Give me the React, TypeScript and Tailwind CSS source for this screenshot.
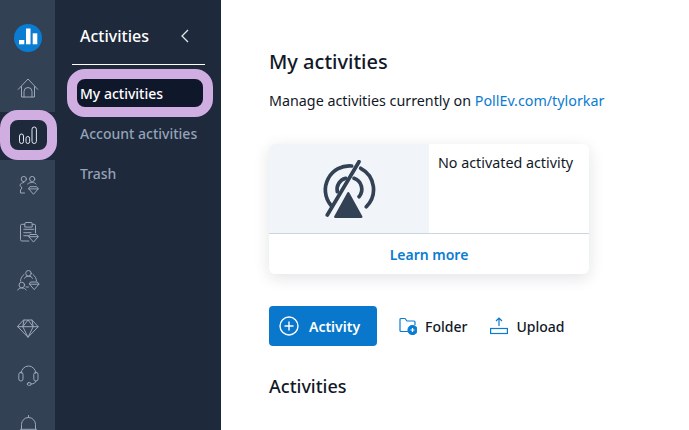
import React from 'react';

const font = { fontFamily: '"Noto Sans", sans-serif' };

const Ic: React.FC<{ children: React.ReactNode }> = ({ children }) => (
  <svg width="24" height="24" viewBox="0 0 24 24" fill="none" stroke="#9ca8b8" strokeWidth="1" strokeLinecap="round" strokeLinejoin="round">
    {children}
  </svg>
);

const Gem: React.FC<{ x: number; y: number }> = ({ x, y }) => (
  <path d={`M${x + 1.5} ${y}h6.400l1.500 2.200-4.700 5.400-4.700-5.400zM${x} ${y + 2.2}h9.400`} />
);

const railIcons: React.ReactNode[] = [
  <Ic key="group">
    <circle cx="7.800" cy="7" r="2.600" />
    <circle cx="16.200" cy="7" r="2.600" />
    <path d="M7.800 10.500c-2 .2-3.800 1.300-3.800 2.800l2 2.700-1.500 2v3h4" />
    <path d="M11.500 12c1.500-1.500 3.500-1.500 5-1.500 1.500 0 2.500.5 3.500 1.500" />
    <Gem x={12.800} y={14.700} />
  </Ic>,
  <Ic key="clip">
    <path d="M8.800 4.300h-3a1.300 1.300 0 0 0-1.300 1.300v14.100a1.300 1.300 0 0 0 1.300 1.300h7" />
    <path d="M16.200 4.300h2a1.300 1.300 0 0 1 1.300 1.300v7.400" />
    <path d="M8.800 6.700v-3a1.200 1.200 0 0 1 1.200-1.200h5a1.200 1.200 0 0 1 1.200 1.200v3z" />
    <path d="M7.800 9.300h10M7.800 12.700h7.200M7.800 15.700h4.700" />
    <Gem x={12.800} y={14.500} />
  </Ic>,
  <Ic key="share">
    <circle cx="12.500" cy="5.300" r="2.800" />
    <path d="M8.500 10.300c.5-1.500 2-2 4-2s3.500.5 4 2" />
    <path d="M4.500 13c0-2.500 1.500-5 3.500-6.500M20.500 13c0-2.500-1.500-5-3.500-6.500" />
    <circle cx="5.800" cy="17" r="2.800" />
    <path d="M1.800 22c.4-1.500 2-2 4-2s3.600.5 4.400 2" />
    <path d="M10 19h2.500" />
    <Gem x={13.500} y={14} />
  </Ic>,
  <Ic key="diamond">
    <path d="M8 4h8l6.200 6.700-10.200 10.600-10.200-10.600z" />
    <path d="M1.800 10.700h20.400M8 4l-1.200 6.700 5.200 10.600 5.200-10.600-1.200-6.700M6.800 10.700l5.200-6.700 5.200 6.700" />
  </Ic>,
  <Ic key="headset">
    <path d="M5.200 9.300a7.300 7.300 0 0 1 14.600 0" />
    <rect x="2.800" y="8.300" width="4.200" height="8.700" rx="2" />
    <rect x="17.800" y="8.300" width="4.200" height="8.700" rx="2" />
    <path d="M19.800 17c0 1.800-1.800 3-4.600 3" />
    <rect x="11.200" y="18.700" width="4" height="2.600" rx="1.300" />
  </Ic>,
  <Ic key="bell">
    <path d="M12.500 3.500v2" />
    <path d="M5.500 17v-4.500a7 7 0 0 1 14 0v4.500" />
    <path d="M4.500 17.300h16" />
  </Ic>,
];

const App: React.FC = () => {
  return (
    <div className="flex h-[430px] w-[689px] overflow-hidden bg-white" style={font}>
      {/* icon rail */}
      <div className="relative z-10 flex h-full w-[55px] shrink-0 flex-col items-stretch bg-[#334155]">
        <div className="flex h-[64px] shrink-0 items-start justify-center pt-[24px]">
          <svg width="28" height="28" viewBox="0 0 28 28">
            <circle cx="14" cy="14" r="14" fill="#0a7cd1" />
            <rect x="5" y="16" width="5.300" height="4.300" fill="#fff" />
            <rect x="12" y="4.500" width="4.500" height="15.800" fill="#fff" />
            <rect x="18.700" y="9.300" width="4.600" height="11" fill="#fff" />
          </svg>
        </div>
        <div className="flex h-[48px] shrink-0 items-center justify-center">
          <Ic>
            <path d="M2.300 13.300l9.700-10.300 9.700 10.300" />
            <path d="M5.500 10.500v10.500h13v-10.500" />
            <path d="M8 21v-5.500a4 4 0 0 1 8 0v5.500" />
          </Ic>
        </div>
        <div className="relative flex h-[48px] shrink-0 items-center justify-center bg-[#1e293b]">
          <svg width="20" height="20" viewBox="0 0 20 20" fill="none" stroke="#e2e8f0" strokeWidth="1">
            <rect x="1.500" y="8" width="4" height="9.500" rx="2" />
            <rect x="8" y="10.500" width="3.600" height="7" rx="1.800" />
            <rect x="14" y="1" width="4.400" height="16.500" rx="2.200" />
          </svg>
          <div className="absolute top-[-2px] left-0 h-[50px] w-[57px] rounded-[18px] border-[10px] border-[#d0aee2]" />
        </div>
        {railIcons.map((icon, i) => (
          <div key={i} className="flex h-[48px] shrink-0 items-center justify-center">
            {icon}
          </div>
        ))}
      </div>

      {/* secondary sidebar */}
      <div className="flex h-full w-[166px] shrink-0 flex-col bg-[#1e293b]">
        <div className="mr-[16px] ml-[17px] flex h-[65px] shrink-0 items-center justify-between border-b border-white pt-[8px] pr-[15px] pl-[8px]">
          <span className="text-base leading-6 font-medium text-white">Activities</span>
          <svg width="10" height="16" viewBox="0 0 10 16" fill="none" stroke="#e2e8f0" strokeWidth="1.300">
            <path d="M8 2l-6 6 6 6" />
          </svg>
        </div>
        <div className="mt-[4px] ml-[12px] flex h-[48px] w-[146px] shrink-0 items-center rounded-[18px] border-[10px] border-[#d0aee2] bg-[#0f172a] pt-[2px] pl-[3px] text-sm font-medium text-white">
          My activities
        </div>
        <div className="-mt-[3px] flex h-[40px] shrink-0 items-center pl-[25px] text-sm font-medium text-[#94a3b8]">Account activities</div>
        <div className="flex h-[40px] shrink-0 items-center pl-[25px] text-sm font-medium text-[#94a3b8]">Trash</div>
      </div>

      {/* main */}
      <div className="flex min-w-0 flex-1 flex-col pt-[48px] pl-[48px]">
        <h1 className="text-xl leading-7 font-medium text-[#111827]">My activities</h1>
        <p className="mt-[15px] text-[14.3px] leading-5 text-[#111827]">
          Manage activities currently on <span className="text-[#0a7cd1]">PollEv.com/tylorkar</span>
        </p>
        <div className="mt-[33px] w-[320px] overflow-hidden rounded-md bg-white shadow-[0_4px_16px_rgba(15,23,42,0.12)]">
          <div className="flex h-[90px] border-b border-[#cbd5e1]">
            <div className="flex w-[160px] items-start justify-center bg-[#f1f5f9] pt-[16px]">
              <svg width="54" height="60" viewBox="0 0 54 60" fill="none" stroke="#334155" strokeWidth="3.700" strokeLinecap="round">
                <path d="M8.700 45a24 24 0 0 1 21-39" />
                <path d="M38.700 8.300a24 24 0 0 1 5.600 38.400" />
                <path d="M15.300 31.700a11.500 11.500 0 0 1 8.400-13.400" />
                <path d="M32 18.300a11.500 11.500 0 0 1 5 18.400" />
                <path d="M37 1.700l-31.700 53.300" />
                <path d="M26.300 33.300l13 23.500h-26z" fill="#334155" strokeWidth="2.400" strokeLinejoin="round" />
              </svg>
            </div>
            <div className="pt-[9px] pl-[9px] text-[14.3px] leading-5 text-[#111827]">No activated activity</div>
          </div>
          <div className="flex h-[40px] items-center justify-center pt-[2px] text-sm font-semibold text-[#0a7cd1]">Learn more</div>
        </div>
        <div className="mt-[32px] flex items-center">
          <button className="flex h-[40px] w-[108px] items-center rounded-sm bg-[#0877cc] pl-[10px] text-sm font-semibold text-white">
            <svg width="20" height="20" viewBox="0 0 20 20" fill="none" stroke="#fff" strokeWidth="1.400" className="mr-[10px]">
              <circle cx="10" cy="10" r="9" />
              <path d="M10 5.500v9M5.500 10h9" />
            </svg>
            <span className="pt-[2px]">Activity</span>
          </button>
          <div className="ml-[22px] flex items-center text-sm font-medium text-[#111827]">
            <svg width="18" height="18" viewBox="0 0 18 18" fill="none" stroke="#0a7cd1" strokeWidth="1.200" className="mr-[8px]">
              <path d="M9 14.500h-7a1 1 0 0 1-1-1v-11a1 1 0 0 1 1-1h4l2 2.500h7a1 1 0 0 1 1 1v3" />
              <circle cx="13.500" cy="13" r="4.500" fill="#0a7cd1" />
              <path d="M11.500 13h4M13.500 11v4" stroke="#fff" />
            </svg>
            <span className="pt-[2px]">Folder</span>
          </div>
          <div className="ml-[23px] flex items-center text-sm font-medium text-[#111827]">
            <svg width="18" height="18" viewBox="0 0 18 18" fill="none" stroke="#0a7cd1" strokeWidth="1.200" className="mr-[8px]">
              <rect x="0.600" y="11.500" width="16.800" height="5" />
              <path d="M9 9v-8M6 4l3-3 3 3" />
            </svg>
            <span className="pt-[2px]">Upload</span>
          </div>
        </div>
        <h2 className="mt-[28px] text-lg leading-6 font-medium text-[#111827]">Activities</h2>
      </div>
    </div>
  );
};

export default App;
